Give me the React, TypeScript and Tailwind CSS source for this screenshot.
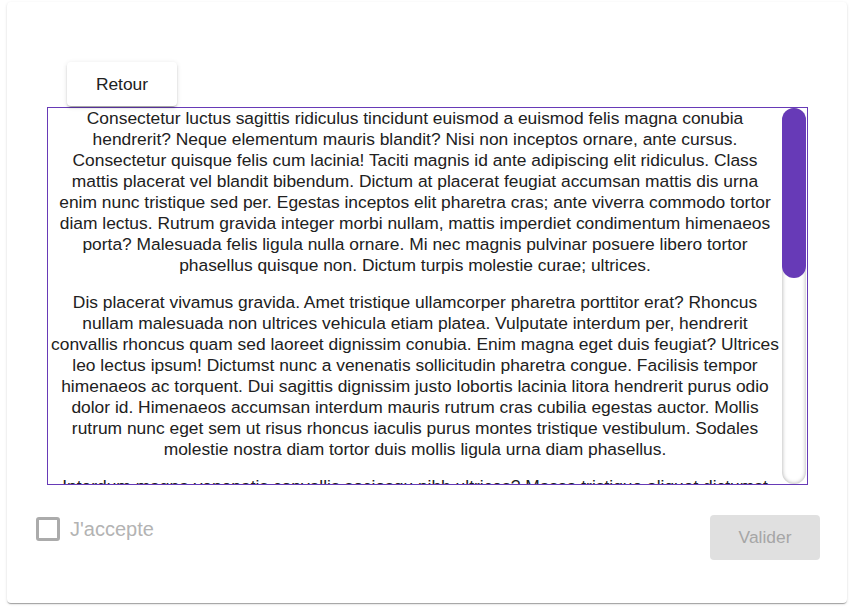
import React, { useState } from 'react';

const paragraphs: string[][] = [
  [
    'Consectetur luctus sagittis ridiculus tincidunt euismod a euismod felis magna conubia hendrerit? Neque elementum mauris blandit? Nisi non inceptos ornare, ante cursus. Consectetur quisque felis cum lacinia! Taciti magnis id ante adipiscing elit ridiculus. Class mattis placerat vel blandit bibendum. Dictum at placerat feugiat accumsan mattis dis urna',
    'enim nunc tristique sed per. Egestas inceptos elit pharetra cras; ante viverra commodo tortor diam lectus. Rutrum gravida integer morbi nullam, mattis imperdiet condimentum himenaeos porta? Malesuada felis ligula nulla ornare. Mi nec magnis pulvinar posuere libero tortor phasellus quisque non. Dictum turpis molestie curae; ultrices.',
  ],
  [
    'Dis placerat vivamus gravida. Amet tristique ullamcorper pharetra porttitor erat? Rhoncus nullam malesuada non ultrices vehicula etiam platea. Vulputate interdum per, hendrerit convallis rhoncus quam sed laoreet dignissim conubia. Enim magna eget duis feugiat? Ultrices leo lectus ipsum! Dictumst nunc a venenatis sollicitudin pharetra congue. Facilisis tempor himenaeos ac torquent. Dui sagittis dignissim justo lobortis lacinia litora hendrerit purus odio dolor id. Himenaeos accumsan interdum mauris rutrum cras cubilia egestas auctor. Mollis rutrum nunc eget sem ut risus rhoncus iaculis purus montes tristique vestibulum. Sodales molestie nostra diam tortor duis mollis ligula urna diam phasellus.',
  ],
  [
    'Interdum magna venenatis convallis sociosqu nibh ultrices? Massa tristique aliquet dictumst mollis vulputate ultricies. Fames habitant velit curabitur nisl parturient per. Lacus sem ligula porta malesuada sapien accumsan et ante nec. Pellentesque integer fusce cubilia donec ad congue vehicula arcu. Netus sit aptent rhoncus primis lobortis. Nisl felis mattis lorem sollicitudin eros dapibus venenatis. Class proin natoque orci suscipit tellus nunc.',
  ],
  [
    'Potenti quam ultricies hac placerat mus curae mi. Eleifend faucibus torquent ridiculus semper sed vitae. Aenean nascetur fringilla diam lectus quis, tempus aliquam ligula. Varius enim blandit ornare dui eu neque. Sagittis cursus magnis vel augue porttitor consequat feugiat. Morbi metus egestas laoreet facilisi nostra imperdiet.',
  ],
];

export default function App() {
  const [checked, setChecked] = useState(false);

  return (
    <div className="min-h-[608px] bg-white pl-[7px] pt-[2px] font-[family-name:'Liberation_Sans',Arial,sans-serif]">
      <div className="w-[840px] h-[601px] bg-white rounded-[4px] shadow-[0_2px_1px_-1px_rgba(0,0,0,0.2),0_1px_1px_0_rgba(0,0,0,0.14),0_1px_3px_0_rgba(0,0,0,0.12)] pt-[60px]">
        <button className="ml-[60px] w-[110px] h-[44px] bg-white rounded-[4px] text-[17.4px] text-[#212121] shadow-[0_3px_1px_-2px_rgba(0,0,0,0.2),0_2px_2px_0_rgba(0,0,0,0.14),0_1px_5px_0_rgba(0,0,0,0.12)]">
          Retour
        </button>

        {/* conditions box with purple scrollbar */}
        <div className="ml-[40px] mt-[1px] w-[761px] h-[378px] border border-[#673ab7] flex">
          <div className="w-[734px] h-full overflow-hidden text-center text-[17.4px] leading-[21px] text-[#212121]">
            {paragraphs.map((parts, i) => (
              <p key={i} className="mb-4">
                {parts.map((t, j) => (
                  <React.Fragment key={j}>
                    {j > 0 && <br />}
                    {t}
                  </React.Fragment>
                ))}
              </p>
            ))}
          </div>
          <div className="w-[24px] h-full rounded-full shadow-[inset_0_0_4px_rgba(0,0,0,0.35)] flex flex-col">
            <div className="h-[170px] w-full rounded-full bg-[#673ab7]" />
          </div>
        </div>

        <div className="flex justify-between items-start mt-[30px] pl-[29px] pr-[27px]">
          <label className="flex items-center gap-[10px] -mt-[1px] cursor-pointer select-none">
            <input
              type="checkbox"
              className="hidden"
              checked={checked}
              onChange={() => setChecked(!checked)}
            />
            <span className="w-[24px] h-[24px] border-[3px] border-[#ababab] rounded-[3px]" />
            <span className="text-[20px] text-[#b3b3b3]">J'accepte</span>
          </label>
          <button
            disabled
            className="w-[110px] h-[45px] bg-[#e0e0e0] rounded-[4px] text-[17.4px] text-[#a6a6a6]"
          >
            Valider
          </button>
        </div>
      </div>
    </div>
  );
}
